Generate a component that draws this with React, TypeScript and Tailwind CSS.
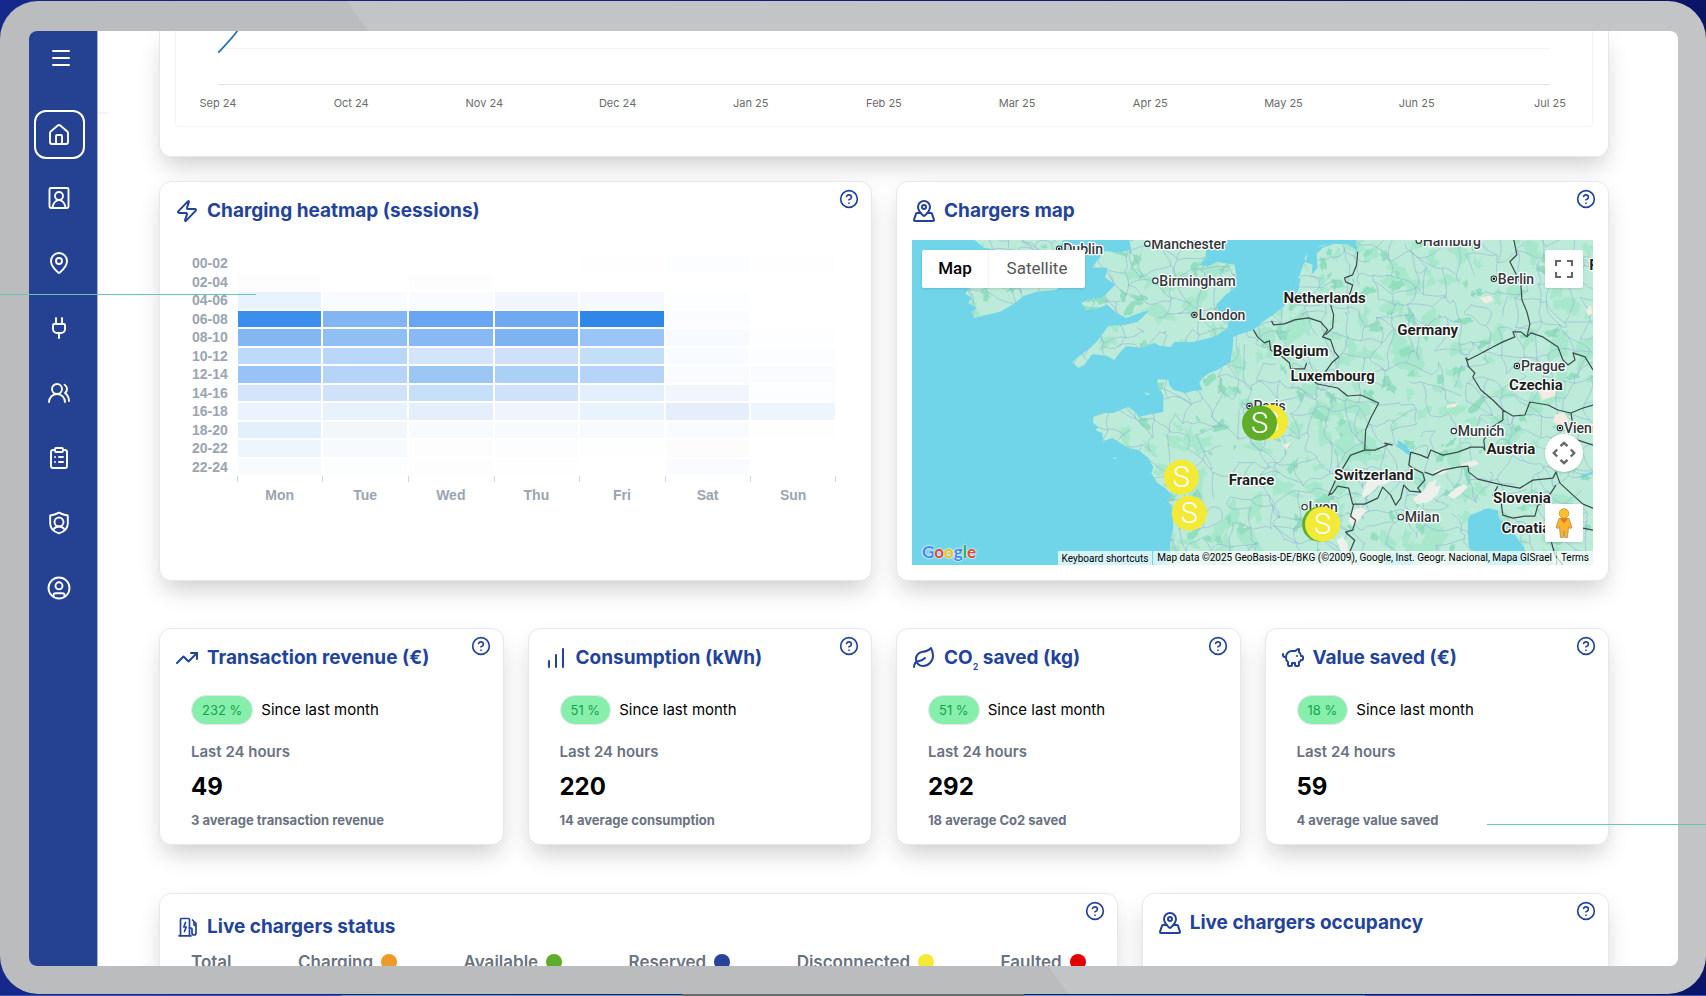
import React from "react";
import {
  ChartNoAxesColumnIncreasing,
  CircleHelp,
  ClipboardList,
  House,
  Leaf,
  MapPinned,
  MapPin,
  Menu,
  PiggyBank,
  Plug,
  TrendingUp,
  UsersRound,
  Zap,
} from "lucide-react";

const MONTHS = [
  "Sep 24",
  "Oct 24",
  "Nov 24",
  "Dec 24",
  "Jan 25",
  "Feb 25",
  "Mar 25",
  "Apr 25",
  "May 25",
  "Jun 25",
  "Jul 25",
];

const DAYS = ["Mon", "Tue", "Wed", "Thu", "Fri", "Sat", "Sun"];

const HEATMAP: { hours: string; cells: string[] }[] = [
  { hours: "00-02", cells: ["#ffffff", "#ffffff", "#ffffff", "#ffffff", "#fefefe", "#fcfdfe", "#fefefe"] },
  { hours: "02-04", cells: ["#fdfdfd", "#ffffff", "#fdfdfd", "#ffffff", "#ffffff", "#ffffff", "#ffffff"] },
  { hours: "04-06", cells: ["#e9f3fd", "#f8fbff", "#f8fbff", "#f1f6fd", "#f5f9fd", "#fdfeff", "#ffffff"] },
  { hours: "06-08", cells: ["#3c8eec", "#82b5f1", "#69a5f0", "#6faaf1", "#2f87ea", "#fbfcff", "#ffffff"] },
  { hours: "08-10", cells: ["#84b6f2", "#90bff3", "#88b9f3", "#7eb3f2", "#9ac5f6", "#f7fafe", "#fdfeff"] },
  { hours: "10-12", cells: ["#bddaf8", "#b9d7f8", "#d4e5fb", "#cfe1fa", "#c3def7", "#f8fbff", "#fcfdfe"] },
  { hours: "12-14", cells: ["#99c3f6", "#b6d4f8", "#9cc6f4", "#accff6", "#b6d4f8", "#f9fbfe", "#f9fbfe"] },
  { hours: "14-16", cells: ["#d3e4fb", "#d0e2fa", "#c7e0fa", "#d0e2fb", "#e3effc", "#f1f6fe", "#fcfdfe"] },
  { hours: "16-18", cells: ["#ebf4fe", "#e8f2fd", "#e4effb", "#f0f5fd", "#e9f3fd", "#e5effc", "#edf5fe"] },
  { hours: "18-20", cells: ["#e3effb", "#f2f7fc", "#f7fbff", "#f8fbfe", "#f8fbfe", "#f9fbfe", "#fefefe"] },
  { hours: "20-22", cells: ["#eef6fd", "#f6fafe", "#fdfdfd", "#fcfdfe", "#fdfefe", "#fcfcfd", "#ffffff"] },
  { hours: "22-24", cells: ["#f7fbfe", "#fcfdfd", "#fdfdfd", "#fefefe", "#ffffff", "#fafbfe", "#ffffff"] },
];

const STATUSES = [
  { label: "Total", dot: "" },
  { label: "Charging", dot: "bg-[#ee9a2b]" },
  { label: "Available", dot: "bg-[#5fad28]" },
  { label: "Reserved", dot: "bg-[#29429a]" },
  { label: "Disconnected", dot: "bg-[#f3ea37]" },
  { label: "Faulted", dot: "bg-[#e30000]" },
];

/* ---------- Icons ---------- */

function ContactIcon() {
  return (
    <svg viewBox="0 0 24 24" className="size-6" fill="none" stroke="currentColor" strokeWidth="1.9" strokeLinejoin="round" strokeLinecap="round">
      <rect x="2.500" y="2" width="19" height="20" rx="1.500" />
      <circle cx="12" cy="10" r="4" />
      <path d="M5.500 21.500c.6-3.700 3-7.500 6.500-7.500s5.900 3.800 6.500 7.500" />
    </svg>
  );
}

function ShieldUserIcon() {
  return (
    <svg viewBox="0 0 24 24" className="size-6" fill="none" stroke="currentColor" strokeWidth="1.9" strokeLinejoin="round" strokeLinecap="round">
      <path d="M12 1.700c2.700 1.500 5.500 2.500 8.800 2.800v8c0 4.800-3.600 8.200-8.800 9.800-5.200-1.600-8.800-5-8.800-9.800v-8c3.300-.3 6.100-1.300 8.800-2.800z" />
      <circle cx="12" cy="11" r="4.500" />
      <path d="M6.300 18.500c1.300-1.900 3.300-3 5.700-3s4.400 1.100 5.700 3" />
    </svg>
  );
}

function AccountIcon() {
  return (
    <svg viewBox="0 0 24 24" className="size-6" fill="none" stroke="currentColor" strokeWidth="1.9" strokeLinejoin="round" strokeLinecap="round">
      <circle cx="12" cy="12" r="10.500" />
      <circle cx="12" cy="9.800" r="3.500" />
      <path d="M6.500 20v-.8a2 2 0 0 1 2-2h7a2 2 0 0 1 2 2v.8" />
    </svg>
  );
}

function ChargerIcon() {
  return (
    <svg viewBox="0 0 24 24" className="size-6" fill="none" stroke="currentColor" strokeWidth="1.700" strokeLinejoin="round" strokeLinecap="round">
      <path d="M5.500 20.500V4.500a1 1 0 0 1 1-1h7a1 1 0 0 1 1 1v16M4 20.800h12" />
      <path d="M10.500 7.500 8.800 12h2.400l-1.700 4.500" />
      <path d="M14.500 13h1.500a1 1 0 0 1 1 1v4a2 2 0 0 0 4 0V8.500L17.500 5M19 7v2.500a1 1 0 0 0 2 0" />
    </svg>
  );
}

/* ---------- Shared card parts ---------- */

function HelpButton() {
  return (
    <button type="button" aria-label="Help" className="absolute top-[7px] right-3 text-[#23439a]">
      <CircleHelp className="size-5" strokeWidth={2} />
    </button>
  );
}

interface CardProps {
  icon: React.ReactNode;
  title: React.ReactNode;
  className?: string;
  children?: React.ReactNode;
}

function Card({ icon, title, className = "", children }: CardProps) {
  return (
    <section
      className={`relative rounded-xl border border-gray-200 bg-white shadow-[0_12px_24px_-4px_rgba(0,0,0,0.2)] ${className}`}
    >
      <header className="flex h-14 items-center gap-2 px-[15px] pt-0.5 text-[#23439a]">
        {icon}
        <h2 className="text-[19px] font-bold whitespace-nowrap">{title}</h2>
      </header>
      <HelpButton />
      {children}
    </section>
  );
}

interface StatCardProps {
  icon: React.ReactNode;
  title: React.ReactNode;
  change: string;
  value: string;
  note: string;
}

function StatCard({ icon, title, change, value, note }: StatCardProps) {
  return (
    <Card icon={icon} title={title} className="h-[217px]">
      <div className="px-[31px] pt-2.5">
        <div className="flex items-center gap-2">
          <span className="rounded-full border border-gray-200 bg-[#86efac] px-2.5 text-[13px] leading-7 text-[#16a34a]">
            {change}
          </span>
          <span className="text-[15px] text-black">Since last month</span>
        </div>
        <p className="mt-[17px] text-[15px] leading-5 font-semibold text-gray-500">Last 24 hours</p>
        <p className="mt-[9px] text-2xl leading-8 font-bold text-black">{value}</p>
        <p className="mt-[9px] text-[13px] leading-4 font-bold text-gray-500">{note}</p>
      </div>
    </Card>
  );
}

/* ---------- Map ---------- */

const BRITAIN =
  "M217 0L219 10L205 13L193 11L184 22L180 28L195 28L193 38L203 45L190 58L178 60L169 63L174 70L184 69L195 65L204 73L214 78L222 75L238 70L225 82L212 85L196 86L186 100L178 108L166 117L160 122L166 128L172 125L180 114L195 116L202 120L208 112L214 106L228 108L242 103L248 106L258 107L262 102L280 102L297 98L305 95L315 88L316 82L305 80L306 73L304 65L312 56L320 50L324 36L322 25L315 24L305 22L295 27L287 25L293 18L294 8L291 0Z";
const IRELAND =
  "M62 0L72 8L84 10L80 22L66 38L58 48L53 54L60 58L56 63L65 68L60 72L62 78L70 76L88 72L100 65L112 56L124 52L145 50L150 35L153 20L148 8L151 0Z";
const CONTINENT =
  "M443 0L445 12L436 5L422 4L410 8L404 14L405 28L399 35L400 25L392 22L386 38L382 50L372 66L362 74L350 82L341 90L328 94L321 97L320 110L318 122L305 130L297 133L290 138L287 143L290 150L280 151L273 153L261 150L257 145L256 140L245 139L246 147L251 155L251 172L245 173L235 175L226 177L223 172L216 167L208 170L201 173L191 173L181 177L181 183L186 187L183 190L190 193L191 201L200 198L208 203L216 208L226 210L236 218L241 227L239 233L245 243L253 248L260 255L255 260L260 267L261 287L258 303L257 325L575 325L568 317L556 307L555 293L555 280L557 275L575 268L585 270L586 278L591 282L596 280L601 293L611 307L618 325L680 325L680 0Z";
const LAND = `${BRITAIN}${IRELAND}${CONTINENT}`;

const BORDERS =
  "M445 12L444 25L440 35L432 38L433 42L440 45L438 52L436 56M418 65L421 75L420 88L413 95M359 81L361 85L372 84L382 80L396 78L408 82L415 90L410 97L418 100L422 112L426 117L420 122L412 133M341 90L345 97L352 103L357 101L358 110L370 117L377 123L378 129L392 129L394 123M392 135L405 144L425 148L435 156L448 155L466 163L458 178L453 190L452 210L462 210L475 205L472 203L480 205M498 212L496 225L500 228L510 233L512 240L505 248L508 252L497 251L491 245L488 258L483 265L478 255L470 247L465 258L452 264L440 264L436 248L425 246L420 253L416 255L424 238L432 225L438 215L452 210M441 264L438 276L443 280L440 290L433 292L442 300L437 312L440 325M498 212L508 215L515 218L518 210L530 215L545 212L558 207L570 207L572 210L571 200L578 188L590 180L590 170M512 232L520 235L530 230L545 227L555 226L556 232L565 239L590 245L607 248L620 240L640 238L643 232L647 243L660 255L670 264L680 268M614 97L608 92L600 92L602 97L590 102L580 107L565 115L555 120L553 118L556 127L562 133L560 137L568 150L580 160L590 170L600 176L612 175L617 162L635 165L645 170L658 173L670 168L680 165M601 0L604 15L597 22L602 32L608 45L609 60L614 72L617 84L614 97L618 93L630 97L645 107L650 120L655 125L662 120L660 113L672 117L680 130M658 173L660 185L655 195L665 200L680 205M585 246L580 255L588 260L590 275L600 278L612 276L622 276L625 265L632 262L643 245M638 300L642 315L650 325M670 288L680 290";

// Small deterministic noise so the road network is the same on every render
function noise(a: number, b: number, c = 0) {
  const n = Math.sin(a * 127.1 + b * 311.7 + c * 74.7) * 43758.5453;
  return n - Math.floor(n);
}

function buildRoads() {
  const step = 16;
  const point = (i: number, j: number): [number, number] => [
    i * step + (noise(i, j) - 0.5) * 16,
    j * step + (noise(i, j, 1) - 0.5) * 16,
  ];
  // chance of leaving out a right, down or diagonal link
  const skip = [0.35, 0.35, 0.85];
  let d = "";
  for (let i = 0; i < 43; i++) {
    for (let j = 0; j < 21; j++) {
      const [x, y] = point(i, j);
      [
        [1, 0],
        [0, 1],
        [1, 1],
      ].forEach(([di, dj], k) => {
        if (noise(i, j, k + 2) < skip[k]) return;
        const [x2, y2] = point(i + di, j + dj);
        const bend = (n: number) => (noise(i, j, k + n) - 0.5) * 12;
        const x1 = x + (x2 - x) / 3 + bend(6);
        const y1 = y + (y2 - y) / 3 + bend(9);
        const x3 = x + ((x2 - x) * 2) / 3 + bend(12);
        const y3 = y + ((y2 - y) * 2) / 3 + bend(15);
        d += `M${x.toFixed(1)} ${y.toFixed(1)}C${x1.toFixed(1)} ${y1.toFixed(1)} ${x3.toFixed(1)} ${y3.toFixed(1)} ${x2.toFixed(1)} ${y2.toFixed(1)}`;
      });
    }
  }
  return d;
}

function buildPatches(seed: number, count: number, size: number) {
  let d = "";
  for (let n = 0; n < count; n++) {
    const cx = noise(n, seed) * 680;
    const cy = noise(n, seed, 1) * 325;
    const r = size * (0.3 + noise(n, seed, 2));
    const tilt = noise(n, seed, 3) * Math.PI;
    for (let k = 0; k < 13; k++) {
      const t = (k / 13) * Math.PI * 2;
      const rr = r * (0.4 + noise(n, k, seed));
      const px = Math.cos(t) * rr * 1.4;
      const py = Math.sin(t) * rr * 0.8;
      const x = cx + px * Math.cos(tilt) - py * Math.sin(tilt);
      const y = cy + px * Math.sin(tilt) + py * Math.cos(tilt);
      d += `${k ? "L" : "M"}${x.toFixed(1)} ${y.toFixed(1)}`;
    }
    d += "Z";
  }
  return d;
}

const ROADS = buildRoads();
const FOREST = buildPatches(3, 300, 9);
const DEEP_FOREST = buildPatches(8, 210, 5);

const COUNTRIES = [
  { name: "Netherlands", x: 412, y: 63 },
  { name: "Germany", x: 515, y: 95 },
  { name: "Belgium", x: 388, y: 116 },
  { name: "Luxembourg", x: 420, y: 141 },
  { name: "Czechia", x: 623, y: 150 },
  { name: "France", x: 339, y: 245 },
  { name: "Switzerland", x: 461, y: 240 },
  { name: "Austria", x: 598, y: 214 },
  { name: "Slovenia", x: 609, y: 263 },
  { name: "Croatia", x: 613, y: 293 },
  { name: "Ireland", x: 107, y: 22 },
];

const CITIES = [
  { name: "Dublin", x: 147, y: 14, capital: true },
  { name: "Manchester", x: 235, y: 9 },
  { name: "Birmingham", x: 243, y: 46 },
  { name: "London", x: 282, y: 80, capital: true },
  { name: "Hamburg", x: 506, y: 6 },
  { name: "Berlin", x: 581, y: 44, capital: true },
  { name: "Prague", x: 604, y: 131, capital: true },
  { name: "Munich", x: 541, y: 196 },
  { name: "Vienna", x: 647, y: 193, capital: true },
  { name: "Paris", x: 337, y: 171, capital: true },
  { name: "Lyon", x: 392, y: 272 },
  { name: "Milan", x: 488, y: 282 },
];

const MARKERS = [
  { x: 358, y: 182, fill: "#f3ea37" },
  { x: 347, y: 183, fill: "#5fad28" },
  { x: 269, y: 237, fill: "#f3ea37" },
  { x: 277, y: 273, fill: "#f3ea37" },
  { x: 407, y: 284, fill: "#5fad28" },
  { x: 410, y: 284, fill: "#f3ea37" },
];

function MapCanvas() {
  return (
    <svg
      viewBox="0 0 680 325"
      preserveAspectRatio="xMidYMid slice"
      className="block size-full font-[Roboto,sans-serif]"
      role="img"
      aria-label="Map of chargers in Western Europe"
    >
      <defs>
        <clipPath id="land">
          <path d={LAND} />
        </clipPath>
      </defs>
      <rect width="680" height="325" fill="#70d5e9" />
      <path d={LAND} fill="#bcecd9" />
      <g clipPath="url(#land)">
        <path d={FOREST} fill="#a7e8cd" />
        <path d={DEEP_FOREST} fill="#92dfbf" />
        <path d={ROADS} fill="none" stroke="#97b4d4" strokeWidth="0.9" opacity="0.7" />
        {/* Alps */}
        <g fill="#eef0ec">
          <path d="M455 240l10-6 6 4 10-6 4 5-12 7-8 2-8 8-8 4 2-9zM500 258l10-6 6-9 8-4-2 8 6-2-3 9-9 8-12 2zM535 255l8-7 8-4 4 3-6 6-8 6zM520 232l10-4 6 2-8 5zM548 224l14-4 4 4-12 4zM440 270l8-3 6 3-8 10-6 6-4-6zM424 300l6-4 5 8 1 12-8-6z" />
          <path fill="#f3ece0" d="M625 150l10-8 9 4-2 10-12 4zM642 175l9-3 5 8-8 6-8-4zM567 58l10-2 4 4-8 4zM673 70l5-4 2 8-5 2zM534 165l12-2-4 4-8 1zM370 205l8-3-4 8z" />
        </g>
        <g fill="#70d5e9">
          <path d="M485 200l9 6 6 9-6-1-9-8zM425 236l8-2 4 3-8 2zM383 40l5-2-2 12-8 12zM471 325l4-10 12-4 10 6 4 8zM668 236l12-5v2l-10 5z" />
        </g>
      </g>
      <path d="M392 18l3-4-2 8zM404 8l14-4-10 2zM232 152l6 2-4 1zM201 217l4 1-3 1z" fill="#bcecd9" />
      <path d={BORDERS} fill="none" stroke="#3a4a48" strokeWidth="1.200" strokeLinejoin="round" />

      <g fontSize="14" fontWeight="500" fill="#33383d" stroke="#ffffff" strokeWidth="2.500" strokeLinejoin="round" paintOrder="stroke">
        {CITIES.map((c) => (
          <React.Fragment key={c.name}>
            <circle cx={c.x} cy={c.y - 5} r="2.600" stroke="#2b2f33" strokeWidth="1.200" paintOrder="normal" />
            <circle cx={c.x} cy={c.y - 5} r={c.capital ? 2.2 : 2.1} fill="#ffffff" stroke="none" />
            {c.capital && <circle cx={c.x} cy={c.y - 5} r="1.300" fill="#111111" stroke="none" />}
            <text x={c.x + 4} y={c.y}>
              {c.name}
            </text>
          </React.Fragment>
        ))}
      </g>
      <g fontSize="15" fontWeight="700" fill="#1c1f22" stroke="#ffffff" strokeWidth="2.500" strokeLinejoin="round" paintOrder="stroke" textAnchor="middle">
        {COUNTRIES.map((c) => (
          <text key={c.name} x={c.x} y={c.y}>
            {c.name}
          </text>
        ))}
        <text x="681" y="30">
          P
        </text>
      </g>

      {MARKERS.map((m) => (
        <g key={`${m.x}-${m.y}`}>
          <circle cx={m.x} cy={m.y} r="17.500" fill={m.fill} />
          <text x={m.x} y={m.y + 10} fontSize="29" fontWeight="300" fill="#ffffff" textAnchor="middle">
            S
          </text>
        </g>
      ))}
    </svg>
  );
}

function ChargersMap() {
  return (
    <div className="relative mx-[15px] mt-0.5 h-[325px] overflow-hidden font-[Roboto,sans-serif]">
      <MapCanvas />
      <div className="absolute top-2.5 left-2.5 flex h-[38px] rounded-xs bg-white text-[17px] shadow">
        <button type="button" className="w-[67px] border-r border-gray-100 font-medium text-black">
          Map
        </button>
        <button type="button" className="w-24 text-[#565656]">
          Satellite
        </button>
      </div>
      <button
        type="button"
        aria-label="Toggle fullscreen view"
        className="absolute top-2.5 right-2.5 flex size-[38px] items-center justify-center rounded-xs bg-white shadow"
      >
        <svg viewBox="0 0 18 18" className="size-[18px]" fill="none" stroke="#666666" strokeWidth="2.200">
          <path d="M1 6V1h5M12 1h5v5M17 12v5h-5M6 17H1v-5" />
        </svg>
      </button>
      <div className="absolute right-2.5 bottom-[23px] flex flex-col gap-8">
        <button
          type="button"
          aria-label="Map camera controls"
          className="flex size-[38px] items-center justify-center rounded-full bg-white shadow"
        >
          <svg viewBox="0 0 24 24" className="size-6" fill="none" stroke="#666666" strokeWidth="2.400">
            <path d="M8.500 5.200 12 1.800l3.500 3.400M8.500 18.800l3.500 3.400 3.500-3.400M5.200 8.500 1.800 12l3.400 3.500M18.800 8.500l3.400 3.500-3.400 3.500" />
          </svg>
        </button>
        <button
          type="button"
          aria-label="Drag Pegman onto the map to open Street View"
          className="flex size-[38px] items-center justify-center rounded-xs bg-white shadow"
        >
          <svg viewBox="0 0 18 32" className="h-8 w-[18px]">
            <path d="M4 11.500h10l3 9-2 1-1.500-1.500-1 10.500H9.800L9 24l-.8 6.500H5.500L4.500 20 3 21.500l-2-1z" fill="#fbb52c" stroke="#a8895a" strokeWidth=".8" />
            <path d="M5 11.500h8L9 16.500z" fill="#e8751a" />
            <circle cx="9" cy="6.500" r="4.800" fill="#fdbf2d" stroke="#c98d2a" strokeWidth=".8" />
          </svg>
        </button>
      </div>
      <a
        href="#google"
        className="absolute bottom-0 left-2.5 font-[Lato,sans-serif] text-[17px] leading-[26px] font-bold [text-shadow:0_0_2px_#fff,0_0_2px_#fff]"
      >
        <span className="text-[#4285f4]">G</span>
        <span className="text-[#ea4335]">o</span>
        <span className="text-[#fbbc05]">o</span>
        <span className="text-[#4285f4]">g</span>
        <span className="text-[#34a853]">l</span>
        <span className="text-[#ea4335]">e</span>
      </a>
      <div className="absolute right-0 bottom-0 flex h-3.5 items-center gap-px text-[10px] whitespace-nowrap text-black">
        <button type="button" className="h-full bg-white/70 px-1">
          Keyboard shortcuts
        </button>
        <span className="bg-white/70 px-1 leading-[14px]">
          Map data ©2025 GeoBasis-DE/BKG (©2009), Google, Inst. Geogr. Nacional, Mapa GISrael
        </span>
        <a href="#terms" className="bg-white/70 px-1 leading-[14px]">
          Terms
        </a>
      </div>
    </div>
  );
}

/* ---------- Charts ---------- */

function TrendCard() {
  return (
    <section className="h-[126px] rounded-b-xl border border-t-0 border-gray-200 bg-white px-[15px] shadow-[0_12px_24px_-4px_rgba(0,0,0,0.2)]">
      <div className="h-[96px] rounded-b border border-t-0 border-gray-100 px-[18px]">
        <div className="mx-6">
          <div className="h-[18px] border-b border-gray-100">
            <svg viewBox="0 0 20 22" className="h-[22px] w-5" fill="none" stroke="#2a72b8" strokeWidth="1.800">
              <path d="M0 22C6 15 13 9 20 -1" />
            </svg>
          </div>
          <div className="h-9 border-b border-gray-200" />
        </div>
        <div className="flex justify-between pt-2.5 text-[11px] leading-4 text-[#6b6b6b]">
          {MONTHS.map((month) => (
            <span key={month} className="w-12 text-center whitespace-nowrap">
              {month}
            </span>
          ))}
        </div>
      </div>
    </section>
  );
}

function Heatmap() {
  return (
    <div className="mt-4 mr-[35px] flex gap-[9px] pl-8 font-['Liberation_Sans',Arial,sans-serif] text-sm font-bold text-[#9ba4b1]">
      <div className="grid h-[222px] grid-rows-12 items-center leading-4">
        {HEATMAP.map((row) => (
          <span key={row.hours}>{row.hours}</span>
        ))}
      </div>
      <div className="flex-1">
        <div className="grid h-[222px] grid-rows-12">
          {HEATMAP.map((row) => (
            <div key={row.hours} className="grid grid-cols-7">
              {row.cells.map((color, i) => (
                <div key={DAYS[i]} className="border border-white" style={{ backgroundColor: color }} />
              ))}
            </div>
          ))}
        </div>
        <div className="grid grid-cols-7 text-center">
          {DAYS.map((day) => (
            <div key={day} className="group">
              <div className="h-1.5 border-l border-gray-300 group-last:border-r" />
              <div className="pt-[3px]">{day}</div>
            </div>
          ))}
        </div>
      </div>
    </div>
  );
}

/* ---------- Page ---------- */

function Sidebar() {
  const items = [
    { label: "Contacts", icon: <ContactIcon /> },
    { label: "Locations", icon: <MapPin className="size-6" strokeWidth={1.9} /> },
    { label: "Chargers", icon: <Plug className="size-6" strokeWidth={1.9} /> },
    { label: "Users", icon: <UsersRound className="size-6" strokeWidth={1.9} /> },
    { label: "Reports", icon: <ClipboardList className="size-6" strokeWidth={1.9} /> },
    { label: "Permissions", icon: <ShieldUserIcon /> },
    { label: "Account", icon: <AccountIcon /> },
  ];

  return (
    <aside className="flex w-[69px] shrink-0 flex-col items-center border-r border-[#a9b4d6] bg-[#254192] text-white">
      <button type="button" aria-label="Toggle menu" className="mt-[15px] mr-1">
        <Menu className="size-6" strokeWidth={2} />
      </button>
      <nav className="mt-10 mr-2 flex flex-col items-center gap-[41px]">
        <a
          href="#home"
          aria-label="Home"
          className="-mb-3.5 flex h-[49px] w-[51px] items-center justify-center rounded-xl border-2 border-white"
        >
          <House className="size-6" strokeWidth={1.9} />
        </a>
        {items.map((item) => (
          <a key={item.label} href={`#${item.label.toLowerCase()}`} aria-label={item.label}>
            {item.icon}
          </a>
        ))}
      </nav>
    </aside>
  );
}

export default function App() {
  const icon = "size-6 shrink-0";

  return (
    <div className="relative flex h-screen flex-col overflow-hidden bg-[linear-gradient(90deg,#15298c,#0b1568)] pt-px font-[Inter,sans-serif]">
      <div className="flex min-h-0 flex-1 rounded-[38px] bg-[linear-gradient(54deg,#bbbcbe_44%,#c2c4c6_44%)] pt-[30px] pr-7 pb-7 pl-[29px]">
        <div className="flex min-w-0 flex-1 overflow-hidden rounded-lg bg-white">
          <Sidebar />
          <div className="mt-[81px] h-0.5 w-2.5 shrink-0 bg-gray-100" />
          <main className="min-w-0 flex-1 pr-[69px] pl-[51px]">
            <TrendCard />

            <div className="mt-6 grid grid-cols-2 gap-6">
              <Card icon={<Zap className={icon} />} title="Charging heatmap (sessions)" className="h-[400px]">
                <Heatmap />
              </Card>
              <Card icon={<MapPinned className={icon} />} title="Chargers map" className="h-[400px]">
                <ChargersMap />
              </Card>
            </div>

            <div className="mt-[47px] grid grid-cols-4 gap-6">
              <StatCard
                icon={<TrendingUp className={icon} />}
                title="Transaction revenue (€)"
                change="232 %"
                value="49"
                note="3 average transaction revenue"
              />
              <StatCard
                icon={<ChartNoAxesColumnIncreasing className={icon} />}
                title="Consumption (kWh)"
                change="51 %"
                value="220"
                note="14 average consumption"
              />
              <StatCard
                icon={<Leaf className={icon} />}
                title={
                  <>
                    CO<sub className="bottom-0 align-[-6px] text-[9px] font-semibold">2</sub> saved (kg)
                  </>
                }
                change="51 %"
                value="292"
                note="18 average Co2 saved"
              />
              <StatCard
                icon={<PiggyBank className={icon} />}
                title="Value saved (€)"
                change="18 %"
                value="59"
                note="4 average value saved"
              />
            </div>

            <div className="mt-12 grid grid-cols-3 gap-6">
              <Card icon={<ChargerIcon />} title="Live chargers status" className="col-span-2 h-60 pt-1">
                <div className="-mt-1 flex justify-between px-[31px] text-[17px] leading-6 font-semibold text-gray-500">
                  {STATUSES.map((status) => (
                    <span key={status.label} className="flex items-center gap-2">
                      {status.label}
                      {status.dot && <span className={`size-4 rounded-full ${status.dot}`} />}
                    </span>
                  ))}
                </div>
              </Card>
              <Card icon={<MapPinned className={icon} />} title="Live chargers occupancy" className="h-60" />
            </div>
          </main>
        </div>
      </div>
      <div className="flex h-0.5 shrink-0 items-end">
        <div className="h-px flex-1 bg-[#3f58ab]" />
        <div className="h-px flex-1 bg-[#5fa3b5]" />
        <div className="h-0.5 flex-1 bg-[#6b6b6b]" />
        <div className="h-px flex-1 bg-[#5fa3b5]" />
        <div className="h-px flex-1 bg-[#3f58ab]" />
      </div>

      {/* Callout lines */}
      <div className="absolute top-[294px] left-0 h-px w-64 bg-[#6cc5b4]" />
      <div className="absolute top-[824px] right-0 h-px w-[219px] bg-[#6cc5b4]" />
    </div>
  );
}
